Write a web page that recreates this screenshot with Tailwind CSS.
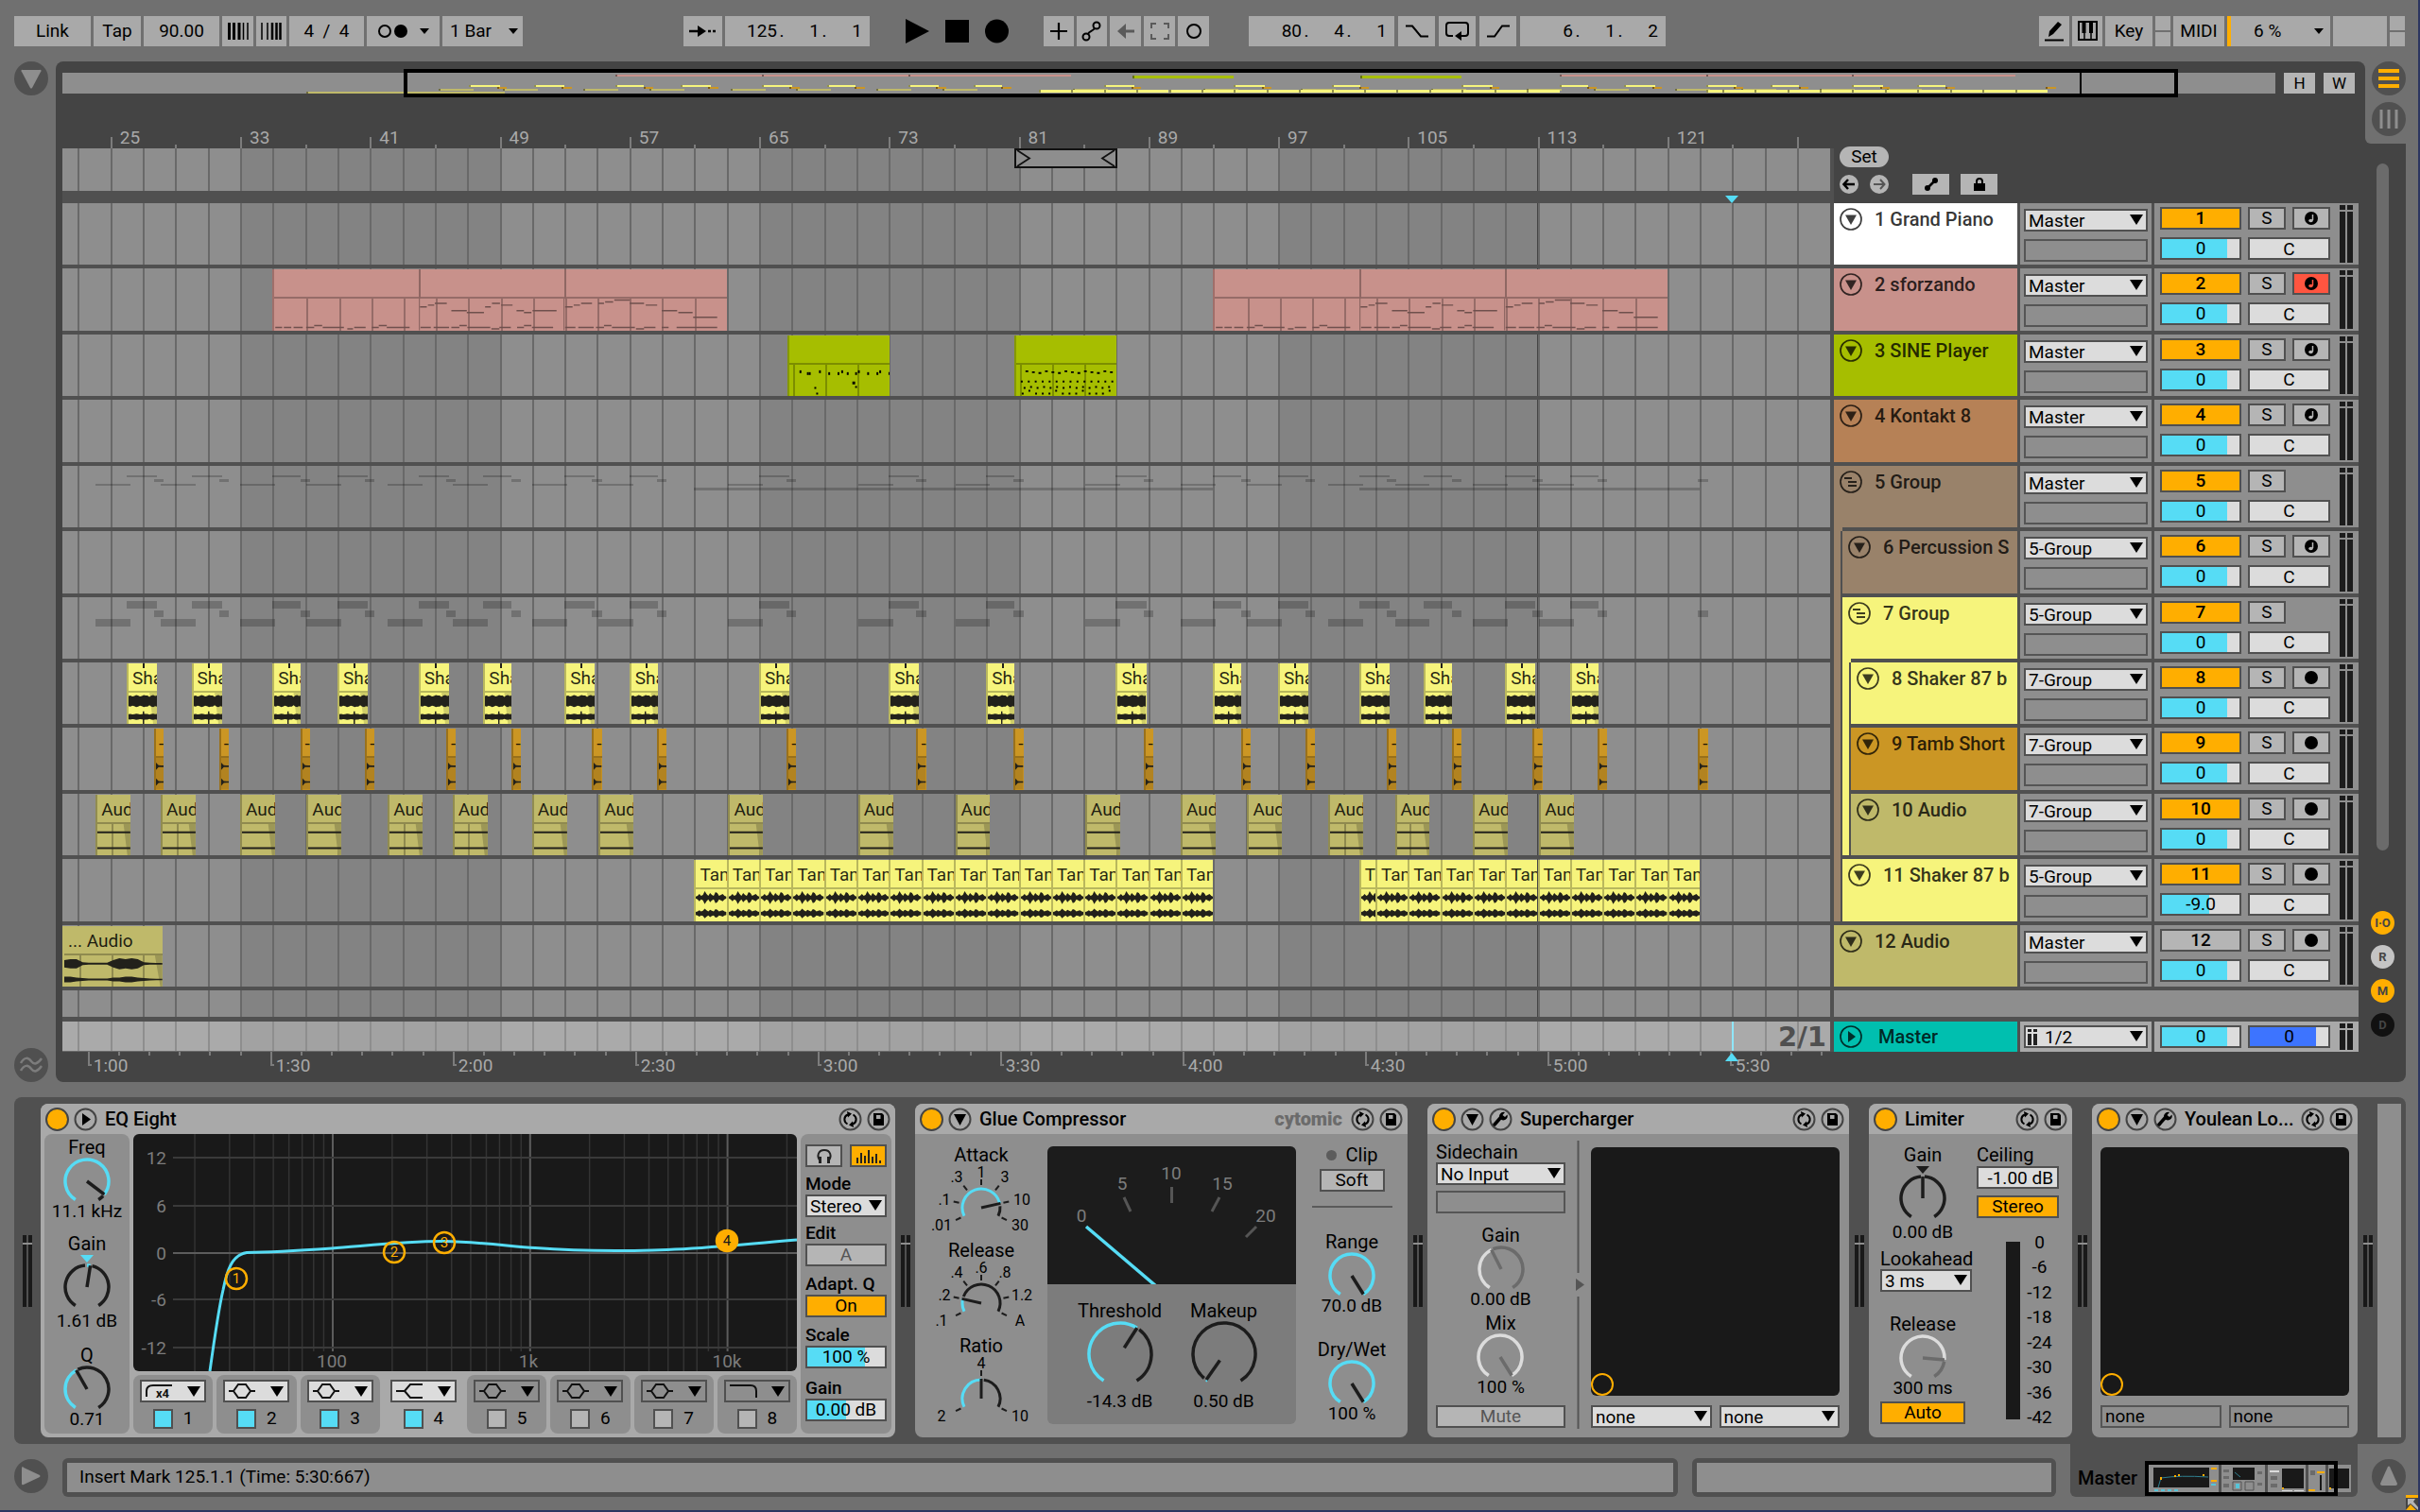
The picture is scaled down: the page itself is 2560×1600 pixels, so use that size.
<!DOCTYPE html>
<html lang="en">
<head>
  <meta charset="UTF-8" />
  <meta name="viewport" content="width=device-width, initial-scale=1" />
  <title>Arrangement</title>
  <script src="https://cdn.jsdelivr.net/npm/@tailwindcss/browser@4"></script>
</head>
<body class="flex h-screen flex-col overflow-hidden border-r-2 border-b-2 border-[#2c3560] bg-[#707070] font-[Roboto,sans-serif] text-[19px] leading-[22px] text-black">

  <!-- Control bar -->
  <header class="flex h-[65px] shrink-0 items-center pr-[14px] pl-[15px]">
    <div class="flex h-8 gap-[3px]">
      <button class="w-[81px] bg-[#a9a9a9]">Link</button>
      <button class="w-[50px] bg-[#a9a9a9]">Tap</button>
      <input aria-label="Tempo" value="90.00" class="w-20 bg-[#a9a9a9] text-center" />
      <button aria-label="Nudge down" class="flex w-[33px] items-center justify-center bg-[#a9a9a9]">
        <svg width="22" height="18" viewBox="0 0 22 18"><path d="M1.5 0v18M6.500 0v18M12 0v18" stroke="#000" stroke-width="3"/><path d="M16.500 0v18M21 0v18" stroke="#000" stroke-width="1.500"/></svg>
      </button>
      <button aria-label="Nudge up" class="flex w-8 items-center justify-center bg-[#a9a9a9]">
        <svg width="22" height="18" viewBox="0 0 22 18"><path d="M1 0v18M7 0v18" stroke="#000" stroke-width="1.500"/><path d="M12 0v18M16.500 0v18M20.500 0v18" stroke="#000" stroke-width="2.500"/></svg>
      </button>
      <input aria-label="Time signature" value="4  /  4" class="w-[79px] bg-[#a9a9a9] text-center whitespace-pre" />
      <button aria-label="Metronome" class="flex w-[77px] items-center gap-3 bg-[#a9a9a9] pl-[11px]">
        <svg width="33" height="16" viewBox="0 0 33 16"><circle cx="8" cy="8" r="6" fill="none" stroke="#000" stroke-width="2"/><circle cx="25" cy="8" r="7" fill="#000"/></svg>
        <svg width="10" height="6" viewBox="0 0 10 6"><path d="M0 0h10L5 6z"/></svg>
      </button>
      <button class="flex w-[85px] items-center justify-between bg-[#a9a9a9] pr-[5px] pl-2">1 Bar
        <svg width="10" height="6" viewBox="0 0 10 6"><path d="M0 0h10L5 6z"/></svg>
      </button>
    </div>

    <div class="ml-[170px] flex h-8 gap-[3px]">
      <button aria-label="Follow" class="flex w-[41px] items-center justify-center bg-[#a9a9a9]">
        <svg width="30" height="14" viewBox="0 0 30 14"><path d="M0 7h11" stroke="#000" stroke-width="2.500"/><path d="M9 1l9 6-9 6z"/><path d="M20 7h3M25 7h3" stroke="#000" stroke-width="2.500"/></svg>
      </button>
      <div data-position="125,1,1" class="flex w-[153px] items-center justify-end bg-[#a9a9a9] pr-2"></div>
    </div>
    <div class="ml-[38px] flex items-center gap-[17px]">
      <button aria-label="Play"><svg width="25" height="28" viewBox="0 0 25 28"><path d="M0 1l25 13L0 27z"/></svg></button>
      <button aria-label="Stop"><svg width="25" height="24" viewBox="0 0 25 24"><path d="M0 0h25v24H0z"/></svg></button>
      <button aria-label="Record"><svg width="25" height="26" viewBox="0 0 25 26"><circle cx="12.500" cy="13" r="12.500"/></svg></button>
    </div>
    <div class="ml-[37px] flex h-8 gap-[3px]">
      <button aria-label="Overdub" class="flex w-8 items-center justify-center bg-[#a9a9a9]"><svg width="18" height="18" viewBox="0 0 18 18"><path d="M9 0v18M0 9h18" stroke="#000" stroke-width="2.200"/></svg></button>
      <button aria-label="Automation arm" class="flex w-8 items-center justify-center bg-[#a9a9a9]"><svg width="22" height="22" viewBox="0 0 22 22" fill="none" stroke="#000" stroke-width="2"><circle cx="5" cy="17" r="3.500"/><circle cx="16" cy="5" r="3.500"/><path d="M7 14c1-3 5-3 7-6"/></svg></button>
      <button aria-label="Re-enable automation" class="flex w-[33px] items-center justify-center bg-[#a9a9a9]"><svg width="18" height="16" viewBox="0 0 18 16"><path d="M18 8H7" stroke="#5a5a5a" stroke-width="3"/><path d="M9 0v16L0 8z" fill="#5a5a5a"/></svg></button>
      <button aria-label="Capture" class="flex w-[33px] items-center justify-center bg-[#a9a9a9]"><svg width="20" height="18" viewBox="0 0 20 18" fill="none" stroke="#5a5a5a" stroke-width="2"><path d="M1 6V1h5M14 1h5v5M19 12v5h-5M6 17H1v-5"/></svg></button>
      <button aria-label="Session record" class="flex w-[33px] items-center justify-center bg-[#a9a9a9]"><svg width="18" height="18" viewBox="0 0 18 18"><circle cx="9" cy="9" r="7" fill="none" stroke="#000" stroke-width="2"/></svg></button>
    </div>
    <div class="ml-[42px] flex h-8 gap-1">
      <div data-position="80,4,1" class="flex w-[154px] items-center justify-end bg-[#a9a9a9] pr-2"></div>
      <button aria-label="Punch in" class="flex w-[39px] items-center justify-center bg-[#a9a9a9]"><svg width="24" height="14" viewBox="0 0 24 14"><path d="M0 1.500h7l9 11h8" fill="none" stroke="#000" stroke-width="2"/></svg></button>
      <button aria-label="Loop" class="flex w-[39px] items-center justify-center bg-[#a9a9a9]"><svg width="26" height="22" viewBox="0 0 26 22"><path d="M8 16H4a3 3 0 0 1-3-3V5a3 3 0 0 1 3-3h17a3 3 0 0 1 3 3v8a3 3 0 0 1-3 3h-5" fill="none" stroke="#000" stroke-width="2"/><path d="M17 11v10l-7-5z"/></svg></button>
      <button aria-label="Punch out" class="flex w-[39px] items-center justify-center bg-[#a9a9a9]"><svg width="24" height="14" viewBox="0 0 24 14"><path d="M0 12.500h8l8-11h8" fill="none" stroke="#000" stroke-width="2"/></svg></button>
      <div data-position="6,1,2" class="flex w-[154px] items-center justify-end bg-[#a9a9a9] pr-2"></div>
    </div>

    <div class="ml-auto flex h-8 gap-[3px]">
      <button aria-label="Draw mode" class="flex w-8 items-center justify-center bg-[#a9a9a9]"><svg width="20" height="22" viewBox="0 0 20 22"><path d="M4 17l1-6 9-10 4 3-9 10zM0 19.500h20v2H0z"/></svg></button>
      <button aria-label="Computer MIDI keyboard" class="flex w-8 items-center justify-center bg-[#a9a9a9]"><svg width="21" height="21" viewBox="0 0 21 21"><path d="M1 1h19v19H1z" fill="none" stroke="#000" stroke-width="2"/><path d="M4.500 1h4v12h-4zM12 1h4v12h-4z"/><path d="M7 12v8M14 12v8" stroke="#000" stroke-width="1.500"/></svg></button>
      <button class="w-[50px] bg-[#a9a9a9]">Key</button>
      <div class="flex w-4 flex-col gap-0.5"><span class="flex-1 bg-[#a9a9a9]"></span><span class="flex-1 bg-[#a9a9a9]"></span></div>
      <button class="w-[54px] bg-[#a9a9a9]">MIDI</button>
      <button class="flex w-[109px] items-center justify-between border-l-4 border-[#ffae00] bg-[#a9a9a9] pr-[7px] pl-6">6 %
        <svg width="10" height="6" viewBox="0 0 10 6"><path d="M0 0h10L5 6z"/></svg>
      </button>
      <span class="w-[57px] bg-[#a9a9a9]"></span>
      <div class="flex w-4 flex-col gap-0.5"><span class="flex-1 bg-[#a9a9a9]"></span><span class="flex-1 bg-[#a9a9a9]"></span></div>
    </div>
  </header>

  <!-- Arrangement -->
  <main class="flex min-h-0 flex-1 pr-[13px]">
    <aside class="flex w-[59px] flex-col justify-between pl-[15px]">
      <button aria-label="Show browser" class="flex size-9 items-center justify-center rounded-full bg-[#505050]"><svg width="22" height="21" viewBox="0 0 22 21"><path d="M2 1h18a1 1 0 0 1 1 2l-9 17q-1 1-2 0L1 3a1 1 0 0 1 1-2z" fill="#8e8e8e"/></svg></button>
      <button aria-label="Show grooves" class="flex size-9 items-center justify-center rounded-full bg-[#505050]"><svg width="24" height="18" viewBox="0 0 24 18" fill="none" stroke="#7c7c7c" stroke-width="2.500"><path d="M1 7c4-7 8-6 11-2s7 3 11-3M1 15c4-7 8-6 11-2s7 3 11-3"/></svg></button>
    </aside>

    <section class="flex min-w-0 flex-1 flex-col rounded-l-[8px] rounded-tr-[8px] bg-[#444] pt-2 pr-[7px] pl-[7px]">
      <div class="flex h-[30px] shrink-0 items-center">
        <div id="overview" class="relative h-[22px] flex-1 bg-[#8e8e8e]"></div>
        <button class="ml-[9px] h-[22px] w-[33px] bg-[#b5b5b5] text-[17px]">H</button>
        <button class="mr-1 ml-[9px] h-[22px] w-[33px] bg-[#b5b5b5] text-[17px]">W</button>
      </div>

      <div class="flex min-h-0 flex-1">
        <div class="flex min-w-0 flex-1 flex-col border-r-4 border-[#505050]">
          <div class="-mr-1 shrink-0 bg-[#444] pr-1"><div id="barRuler" class="relative h-[54px] text-[#a9a9a9]"></div></div>
          <div id="beatLane" class="relative h-[45px] shrink-0"></div>
          <div id="scrub" class="relative h-[13px] shrink-0 bg-[#505050]"></div>
          <div class="relative flex min-h-0 flex-1 flex-col">
            <div id="grid" class="absolute inset-0"></div>
            <div id="lanes" class="relative flex min-h-0 flex-1 flex-col"></div>
            <div class="relative h-[33px] shrink-0 border-b-5 border-[#505050]"></div>
            <div class="relative h-8 shrink-0 border-b border-[#696969] bg-white/25">
              <div class="flex h-full items-center justify-end pr-1 font-['DejaVu_Sans',sans-serif] text-[29px] font-bold text-[#505050]">2/1</div>
              <div id="playhead" class="absolute top-0 h-full w-0.5 bg-[#8fe6f8]"></div>
            </div>
          </div>
          <div class="-mr-1 shrink-0 bg-[#444] pr-1"><div id="timeRuler" class="relative h-8 text-[#a9a9a9]"></div></div>
        </div>

        <div class="flex w-[555px] shrink-0 flex-col">
          <div class="h-[112px] shrink-0 pt-[52px] pl-1.5">
            <button class="h-[22px] w-[52px] rounded-full bg-[#b5b5b5]">Set</button>
            <div class="mt-2 flex h-5 items-center">
              <button aria-label="Previous locator" class="flex size-5 items-center justify-center rounded-full bg-[#b5b5b5]"><svg width="14" height="12" viewBox="0 0 14 12" fill="none" stroke="#000" stroke-width="2.500"><path d="M13 6H2M6 1L1.500 6 6 11"/></svg></button>
              <button aria-label="Next locator" class="ml-3 flex size-5 items-center justify-center rounded-full bg-[#b5b5b5]"><svg width="14" height="12" viewBox="0 0 14 12" fill="none" stroke="#555" stroke-width="2"><path d="M1 6h11M8 1l4.500 5L8 11"/></svg></button>
              <button aria-label="Automation mode" class="ml-[25px] flex h-[22px] w-[39px] items-center justify-center bg-[#b5b5b5]"><svg width="14" height="14" viewBox="0 0 14 14"><circle cx="3" cy="11" r="3"/><circle cx="11" cy="3" r="3"/><path d="M3 11L11 3" stroke="#000" stroke-width="2.500"/></svg></button>
              <button aria-label="Lock envelopes" class="ml-3 flex h-[22px] w-[39px] items-center justify-center bg-[#b5b5b5]"><svg width="14" height="14" viewBox="0 0 14 14"><path d="M1 6h12v8H1z"/><path d="M4 7V4a3 3 0 0 1 6 0v3" fill="none" stroke="#000" stroke-width="2"/></svg></button>
            </div>
          </div>
          <div id="headers" class="flex min-h-0 flex-1 flex-col bg-[#505050]"></div>
          <div class="h-[33px] shrink-0 border-b-5 border-[#505050] bg-[#8e8e8e]"></div>
          <div id="masterHeader" class="flex h-8 shrink-0 gap-[3px] bg-[#505050]"></div>
          <div class="h-8 shrink-0"></div>
        </div>
      </div>
    </section>

    <aside class="flex w-[43px] shrink-0 flex-col rounded-r-[8px] bg-[#444]">
      <div class="flex h-[87px] shrink-0 flex-col items-end gap-[7px] rounded-bl-[6px] bg-[#707070]">
        <button aria-label="Arrangement view" class="flex size-9 items-center justify-center rounded-full bg-[#505050]"><svg width="22" height="20" viewBox="0 0 22 20"><path d="M0 2h22M0 10h22M0 18h22" stroke="#ffae00" stroke-width="4"/></svg></button>
        <button aria-label="Session view" class="flex size-9 items-center justify-center rounded-full bg-[#505050]"><svg width="20" height="20" viewBox="0 0 20 20"><path d="M2 0v20M10 0v20M18 0v20" stroke="#8e8e8e" stroke-width="3"/></svg></button>
      </div>
      <div class="mt-[21px] ml-3 w-[13px] flex-1 rounded-full bg-[#6b6b6b]"></div>
      <div class="mt-16 mb-12 ml-1.5 flex flex-col gap-[11px] text-[13px] leading-[13px] font-bold text-[#444]">
        <button class="size-[25px] rounded-full bg-[#ffae00]">I·O</button>
        <button class="size-[25px] rounded-full bg-[#c4c4c4]">R</button>
        <button class="size-[25px] rounded-full bg-[#ffae00]">M</button>
        <button class="size-[25px] rounded-full bg-[#111]">D</button>
      </div>
    </aside>
  </main>

  <!-- Device chain -->
  <section class="mt-4 mr-[13px] ml-[15px] flex h-[367px] shrink-0 rounded-[8px] bg-[#505050] py-[7px] pr-[5px]">
    <div data-meter class="flex w-7 shrink-0 items-center justify-center"></div>

    <article class="w-[904px] shrink-0 rounded-[8px] bg-[#a9a9a9]">
      <div data-title="EQ Eight" data-icons="play"></div>
      <div class="flex gap-1 px-1">
        <div class="flex h-[317px] w-[90px] flex-col items-center rounded-[8px] bg-[#8e8e8e] pt-[3px]">
          <div data-knob="Freq" data-value="11.1 kHz" data-pos="0.93"></div>
          <div class="mt-3" data-knob="Gain" data-value="1.61 dB" data-pos="0.53" data-bipolar="#56dcf5"></div>
          <div class="mt-3.5" data-knob="Q" data-value="0.71" data-pos="0.40"></div>
        </div>
        <div class="w-[702px]">
          <svg id="eq" class="block h-[251px] w-full rounded-[6px] bg-[#191919]" viewBox="0 0 702 251"></svg>
          <div id="bands" class="mt-1 flex h-[62px] gap-1"></div>
        </div>
        <div class="flex h-[317px] w-[96px] flex-col rounded-[8px] bg-[#8e8e8e] px-[5px] pt-[11px] font-medium">
          <div class="flex justify-between">
            <button aria-label="Audition" class="flex h-6 w-[39px] items-center justify-center border-2 border-[#505050] bg-[#b5b5b5]"><svg width="18" height="17" viewBox="0 0 18 17" fill="none" stroke="#222"><path d="M5 14C0 8 3 2 9 2s9 6 4 12" stroke-width="2"/><path d="M4.500 9v7M13.500 9v7" stroke-width="3"/></svg></button>
            <button aria-label="Analyzer" class="flex h-6 w-[39px] items-center justify-center border-2 border-[#505050] bg-[#ffae00]"><svg width="26" height="15" viewBox="0 0 26 15"><path d="M1 15V9M5 15V4M9 15V7M13 15V1M17 15V8M21 15V5M25 15v-3" stroke="#222" stroke-width="2"/></svg></button>
          </div>
          <span class="mt-[7px]">Mode</span>
          <div data-select="Stereo" data-label="Mode" class="font-normal"></div>
          <span class="mt-1.5">Edit</span>
          <button class="h-6 border-2 border-[#505050] bg-[#b5b5b5] leading-5 font-normal text-[#555]">A</button>
          <span class="mt-2">Adapt. Q</span>
          <button class="h-6 border-2 border-[#505050] bg-[#ffae00] leading-5 font-normal">On</button>
          <span class="mt-2">Scale</span>
          <div data-slider="100 %" data-fill="74" data-label="Scale"></div>
          <span class="mt-2.5">Gain</span>
          <div data-slider="0.00 dB" data-fill="50" data-label="Output gain"></div>
        </div>
      </div>
    </article>

    <div data-meter class="flex w-[21px] shrink-0 items-center justify-center"></div>

    <article class="w-[521px] shrink-0 rounded-[8px] bg-[#8e8e8e]">
      <div data-title="Glue Compressor" data-icons="down" data-brand="cytomic"></div>
      <div class="flex">
        <div class="flex w-[140px] flex-col items-center pt-[11px] text-[20px]">
          <span>Attack</span>
          <div data-dial=".01,.1,.3,1,3,10,30" data-index="5" data-label="Attack"></div>
          <span>Release</span>
          <div data-dial=".1,.2,.4,.6,.8,1.2,A" data-index="1" data-label="Release"></div>
          <span>Ratio</span>
          <div data-dial="2,,,4,,,10" data-index="3" data-label="Ratio"></div>
        </div>
        <div class="mt-[13px] h-[294px] w-[263px] overflow-hidden rounded-[6px] bg-[#7c7c7c]">
          <svg class="block h-[146px] w-full bg-[#1c1c1c]" viewBox="0 0 263 146">
            <g stroke="#555" stroke-width="3"><path d="M81 54l7 15M131.500 43v17M182 54l-8 15M221 85l-11 11"/></g>
            <g fill="#7c7c7c" font-size="19" text-anchor="middle"><text x="36" y="80">0</text><text x="79" y="46">5</text><text x="131" y="35">10</text><text x="185" y="46">15</text><text x="231" y="80">20</text></g>
            <path d="M41 85l74 63" stroke="#56dcf5" stroke-width="3.500"/>
          </svg>
          <div class="flex justify-center gap-[22px] pt-[17px]">
            <div class="w-[88px]" data-knob="Threshold" data-value="-14.3 dB" data-pos="0.61" data-r="33"></div>
            <div class="w-[88px]" data-knob="Makeup" data-value="0.50 dB" data-pos="0.01" data-r="33"></div>
          </div>
        </div>
        <div class="flex flex-1 flex-col items-center pt-[11px]">
          <div class="flex items-center gap-2.5 text-[20px]"><span class="size-[11px] rounded-full bg-[#5c5c5c]"></span>Clip</div>
          <button class="mt-1 h-6 w-[69px] border-2 border-[#505050] bg-[#b5b5b5] leading-5">Soft</button>
          <div class="mt-[15px] h-0.5 w-[85px] bg-[#5a5a5a]"></div>
          <div class="mt-[25px]" data-knob="Range" data-value="70.0 dB" data-pos="1"></div>
          <div class="mt-6" data-knob="Dry/Wet" data-value="100 %" data-pos="1"></div>
        </div>
      </div>
    </article>

    <div data-meter class="flex w-[21px] shrink-0 items-center justify-center"></div>

    <article class="w-[446px] shrink-0 rounded-[8px] bg-[#8e8e8e]">
      <div data-title="Supercharger" data-icons="down,wrench"></div>
      <div class="flex">
        <div class="flex w-[146px] flex-col pt-2 pl-[9px]">
          <span class="text-[20px]">Sidechain</span>
          <div data-select="No Input" data-label="Sidechain"></div>
          <div class="mt-1.5 h-6 border-2 border-[#555]"></div>
          <div class="mt-3 self-center" data-knob="Gain" data-value="0.00 dB" data-pos="0.41" data-off></div>
          <div class="mt-[3px] self-center" data-knob="Mix" data-value="100 %" data-pos="1" data-off></div>
          <button class="mt-2 h-6 border-2 border-[#505050] bg-[#b5b5b5] leading-5 text-[#555]">Mute</button>
        </div>
        <svg class="mt-[7px] ml-[7px]" width="14" height="305" viewBox="0 0 14 305"><path d="M6.500 0v140M6.500 165v140" stroke="#555" stroke-width="2"/><path d="M4 146l9 6.500-9 6.500z" fill="#555"/></svg>
        <div class="mt-3.5 ml-1.5 w-[263px]">
          <div class="flex h-[263px] items-end rounded-[6px] bg-[#191919]"><span class="size-6 rounded-full border-2 border-[#ffae00]"></span></div>
          <div class="mt-2.5 flex gap-2">
            <div data-select="none" data-label="X parameter" class="flex-1"></div>
            <div data-select="none" data-label="Y parameter" class="flex-1"></div>
          </div>
        </div>
      </div>
    </article>

    <div data-meter class="flex w-[21px] shrink-0 items-center justify-center"></div>

    <article class="w-[215px] shrink-0 rounded-[8px] bg-[#8e8e8e]">
      <div data-title="Limiter" data-icons=""></div>
      <div class="flex pl-3">
        <div class="flex w-[97px] flex-col pt-[11px]">
          <div class="w-[90px]" data-knob="Gain" data-value="0.00 dB" data-pos="0.5" data-bipolar="#1c1c1c"></div>
          <span class="mt-1.5 text-[20px]">Lookahead</span>
          <div data-select="3 ms" data-label="Lookahead"></div>
          <div class="mt-[23px] w-[90px]" data-knob="Release" data-value="300 ms" data-pos="0.82" data-off></div>
          <button class="mt-[3px] h-6 w-[90px] border-2 border-[#505050] bg-[#ffae00] leading-5">Auto</button>
        </div>
        <div class="ml-[5px] flex w-[87px] flex-col pt-[11px]">
          <label for="ceiling" class="text-[20px]">Ceiling</label>
          <input id="ceiling" value="-1.00 dB" class="mt-px h-6 border-2 border-[#505050] bg-[#dcdcdc] pr-1 text-right" />
          <button class="mt-[7px] h-6 border-2 border-[#505050] bg-[#ffae00] leading-5">Stereo</button>
          <div class="mt-[15px] flex justify-end">
            <span class="mt-2.5 h-[188px] w-[15px] bg-[#191919]"></span>
            <div class="flex h-[207px] w-[41px] flex-col justify-between text-center"><span>0</span><span>-6</span><span>-12</span><span>-18</span><span>-24</span><span>-30</span><span>-36</span><span>-42</span></div>
          </div>
        </div>
      </div>
    </article>

    <div data-meter class="flex w-[21px] shrink-0 items-center justify-center"></div>

    <article class="w-[281px] shrink-0 rounded-[8px] bg-[#8e8e8e]">
      <div data-title="Youlean Lo..." data-icons="down,wrench"></div>
      <div class="mx-[9px] mt-3.5 flex h-[263px] items-end rounded-[6px] bg-[#191919]"><span class="size-6 rounded-full border-2 border-[#ffae00]"></span></div>
      <div class="mx-[9px] mt-2.5 flex gap-2">
        <div class="h-6 flex-1 border-2 border-[#555] pl-[3px] leading-5">none</div>
        <div class="h-6 flex-1 border-2 border-[#555] pl-[3px] leading-5">none</div>
      </div>
    </article>

    <div data-meter class="flex w-[21px] shrink-0 items-center justify-center"></div>
    <div class="flex-1 bg-[#8e8e8e]"></div>
  </section>

  <!-- Status bar -->
  <footer class="flex h-[70px] shrink-0 pr-[13px] pl-[15px]">
    <button aria-label="Info view" class="mt-4 flex size-9 items-center justify-center rounded-full bg-[#505050]"><svg width="22" height="22" viewBox="0 0 22 22"><path d="M2 1q-1 0-1 2v16q0 2 2 1l17-8q1-1 0-2L3 2z" fill="#8e8e8e"/></svg></button>
    <div class="mt-[15px] ml-[15px] h-[41px] flex-1 rounded-[6px] bg-[#505050] p-[5px]"><div class="h-full bg-[#8e8e8e] pl-[13px] leading-[30px]">Insert Mark 125.1.1 (Time: 5:30:667)</div></div>
    <div class="mt-[15px] ml-[15px] h-[41px] w-[385px] rounded-[6px] bg-[#505050] p-[5px]"><div class="h-full bg-[#8e8e8e]"></div></div>
    <div class="ml-[15px] flex h-14 w-[304px] items-center rounded-b-[6px] bg-[#505050] pt-4 pl-2 text-[20px] font-medium">
      <span class="w-[71px]">Master</span>
      <div class="relative h-[37px] flex-1 py-[3px]">
        <svg id="thumb" class="h-[31px] w-[218px]" viewBox="0 0 218 31"></svg>
        <div class="absolute top-0 left-0 h-full w-[204px] border-4 border-black"></div>
      </div>
    </div>
    <div class="relative flex w-[51px] justify-end">
      <button aria-label="Show devices" class="mt-4 flex size-9 items-center justify-center rounded-full bg-[#505050]"><svg width="22" height="22" viewBox="0 0 22 22"><path d="M10 1q1-1 2 0l8 18q0 2-2 2H4q-2 0-2-2z" fill="#8e8e8e"/></svg></button>
      <svg class="absolute -right-[13px] bottom-0" width="13" height="16" viewBox="0 0 13 16"><path d="M0 0h13v16H0z" fill="#444"/><path d="M0 0h13v3H0zM0 16l5-6 3 3 3 3z" fill="#ffae00"/><path d="M2 4h8L8 7l5 6v3L5 9l-3 2z" fill="#b5b5b5"/></svg>
    </div>
  </footer>

  <script>
    const FIRST = 22.04, LAST = 131.04;
    const pct = bar => (bar - FIRST) / (LAST - FIRST) * 100;
    const $ = id => document.getElementById(id);
    const arrow = '<svg width="14" height="11" viewBox="0 0 14 11"><path d="M0 0h14L7 11z"/></svg>';

    // ---- shared controls ----
    function select(value, label, prefix) {
      return `<div class="relative h-6 border-2 border-[#505050] bg-[#dcdcdc]">
        ${prefix || ''}<select aria-label="${label}" class="h-full w-full appearance-none leading-5 ${prefix ? 'pl-5' : 'pl-[3px]'}"><option>${value}</option></select>
        <span class="pointer-events-none absolute top-1 right-[3px]">${arrow}</span></div>`;
    }

    function slider(value, fill, label, blue) {
      return `<div class="relative h-6 border-2 border-[#505050] bg-[#dcdcdc] font-normal">
        <div class="absolute inset-y-0 left-0 ${blue ? 'bg-[#3d74ff]' : 'bg-[#56dcf5]'}" style="width:${fill}%"></div>
        <input aria-label="${label}" value="${value}" class="relative block h-5 w-full text-center" /></div>`;
    }

    function polar(cx, cy, r, deg) {
      const a = (deg - 90) * Math.PI / 180;
      return [cx + r * Math.cos(a), cy + r * Math.sin(a)];
    }

    function arc(cx, cy, r, from, to) {
      const [x1, y1] = polar(cx, cy, r, from), [x2, y2] = polar(cx, cy, r, to);
      return `M${x1} ${y1}A${r} ${r} 0 ${to - from > 180 ? 1 : 0} 1 ${x2} ${y2}`;
    }

    function knob(d) {
      const r = d.r ? +d.r : 23, off = 'off' in d, bi = d.bipolar;
      const cx = r + 2, cy = bi ? 35 : r + 2;
      const h = bi ? 60 : (r > 30 ? 74 : 46);
      const deg = -148 + 296 * d.pos;
      const on = off ? '#dcdcdc' : '#56dcf5', dark = off ? '#6b6b6b' : '#1c1c1c';
      const gap = 5;
      let s = '';
      if (bi) {
        s += `<path d="M${cx - 7} 1h14l-7 8z" fill="${bi}"/>`;
        s += `<path d="${arc(cx, cy, r, -148, -gap)}" stroke="${dark}"/><path d="${arc(cx, cy, r, Math.max(deg, 0) + gap, 148)}" stroke="${dark}"/>`;
        if (deg > 1) s += `<path d="${arc(cx, cy, r, 0, deg)}" stroke="${on}"/>`;
      } else {
        s += `<path d="${arc(cx, cy, r, -148, deg)}" stroke="${on}"/>`;
        if (deg + gap < 146) s += `<path d="${arc(cx, cy, r, deg + gap, 148)}" stroke="${dark}"/>`;
      }
      const [x0, y0] = polar(cx, cy, r > 30 ? 8 : 0, deg), [x1, y1] = polar(cx, cy, r, deg);
      s += `<path d="M${x0} ${y0}L${x1} ${y1}" stroke="${dark}"/>`;
      return `<label class="relative flex flex-col items-center"><span class="text-[20px]">${d.knob}</span>
        <svg width="${cx * 2}" height="${h}" viewBox="0 0 ${cx * 2} ${h}" fill="none" stroke-width="3.5">${s}</svg>
        <span class="whitespace-nowrap">${d.value}</span><input type="range" value="${d.pos * 100}" class="absolute inset-0 opacity-0" /></label>`;
    }

    function dial(d) {
      const cx = 70, cy = 45, deg = i => -116 + i * 116 / 3, at = deg(+d.index);
      const spots = [[-42, 24], [-39, -3], [-26, -27], [0, -32], [25, -27], [43, -3], [41, 24]];
      let s = `<path d="${arc(cx, cy, 20, -116, at)}" stroke="#56dcf5"/><path d="${arc(cx, cy, 20, at + 8, 116)}" stroke="#1c1c1c"/>`;
      d.dial.split(',').forEach((t, i) => {
        if (!t) return;
        const [x1, y1] = polar(cx, cy, 24, deg(i)), [x2, y2] = polar(cx, cy, 30, deg(i));
        s += `<path d="M${x1} ${y1}L${x2} ${y2}" stroke="#1c1c1c" stroke-width="2"/>`;
        s += `<text x="${cx + spots[i][0]}" y="${cy + spots[i][1]}" font-size="16" fill="#000" stroke="none" text-anchor="middle">${t}</text>`;
      });
      const [px, py] = polar(cx, cy, 21, at);
      s += `<path d="M${cx} ${cy}L${px} ${py}" stroke="#1c1c1c"/>`;
      return `<label class="relative block"><svg width="140" height="79" viewBox="0 0 140 79" fill="none" stroke-width="3">${s}</svg>
        <input type="range" aria-label="${d.label}" class="absolute inset-0 opacity-0" /></label>`;
    }

    // ---- device title bars ----
    const icons = {
      play: '<path d="M9 6v13l9-6.500z"/>',
      down: '<path d="M6 7h13l-6.500 12z"/>',
      wrench: '<path d="M6 18l7-8" stroke="#000" stroke-width="3.500" stroke-linecap="round"/><path d="M12 12a4.500 4.500 0 0 1 5-7l-2.500 3 2.500 2 2.500-2.500a4.500 4.500 0 0 1-7.500 4.500z"/>',
      swap: '<path d="M9.500 17.500C5 15 5.500 9 10 7.500M15.500 7.500C20 10 19.500 16 15 17.500" fill="none" stroke="#000" stroke-width="2"/><path d="M9 4l5 2.500-4 4zM16 21l-5-2.500 4-4z"/>',
      save: '<path d="M7 6h9l2 2v11H7z"/><path d="M10 8h4.500v4H10z" fill="#a9a9a9"/>'
    };
    const names = { play: 'Fold display', down: 'Unfold', wrench: 'Open plug-in window', swap: 'Hot-swap', save: 'Save preset' };
    const ring = k => `<button aria-label="${names[k]}"><svg width="25" height="25" viewBox="0 0 25 25"><circle cx="12.5" cy="12.5" r="11" fill="none" stroke="#444" stroke-width="2"/>${icons[k]}</svg></button>`;

    document.querySelectorAll('[data-title]').forEach(el => {
      const d = el.dataset;
      el.className = 'flex h-8 items-center gap-[5px] rounded-t-[8px] bg-[#a9a9a9] pr-[5px] pl-[5px] text-[20px] font-medium';
      el.innerHTML = `<button aria-label="${d.title} on" class="size-[25px] rounded-full border-2 border-[#444] bg-[#ffae00]"></button>
        ${d.icons ? d.icons.split(',').map(ring).join('') : ''}<h2 class="ml-[3px] flex-1 whitespace-nowrap">${d.title}</h2>
        ${d.brand ? `<span class="mr-1 text-[20px] font-black text-[#6b6b6b]">${d.brand}</span>` : ''}${ring('swap')}${ring('save')}`;
    });

    document.querySelectorAll('[data-meter]').forEach(el => {
      el.innerHTML = '<svg width="10" height="76" viewBox="0 0 10 76"><path d="M2 0v76M8 0v76" stroke="#191919" stroke-width="4"/><path d="M0 9h10" stroke="#8e8e8e" stroke-width="2"/></svg>';
    });
    document.querySelectorAll('[data-knob]').forEach(el => el.innerHTML = knob(el.dataset));
    document.querySelectorAll('[data-dial]').forEach(el => el.innerHTML = dial(el.dataset));
    document.querySelectorAll('[data-select]').forEach(el => el.innerHTML = select(el.dataset.select, el.dataset.label));
    document.querySelectorAll('[data-slider]').forEach(el => el.innerHTML = slider(el.dataset.slider, el.dataset.fill, el.dataset.label));
    document.querySelectorAll('[data-position]').forEach(el => {
      const unit = ['Bars', 'Beats', 'Sixteenths'];
      el.innerHTML = el.dataset.position.split(',').map((v, i) =>
        `<input aria-label="${unit[i]}" value="${v}" class="w-[35px] text-right" />`).join('<span class="w-2.5 text-center">.</span>');
    });

    // ---- EQ display ----
    (function () {
      const X = f => 211 + Math.log10(f / 100) * 208.8;
      let s = '';
      for (const dec of [10, 100, 1000, 10000])
        for (let m = 1; m < 10; m++) {
          const f = dec * m;
          if (f < 20 || f > 20000) continue;
          const major = m === 1;
          s += `<path d="M${X(f)} 0V${major || m === 9 || m === 8 ? 230 : 251}" stroke="${major ? '#5c5c5c' : '#333'}" stroke-width="${major ? 2 : 1.5}"/>`;
        }
      [[12, 25], [6, 76], [0, 126], [-6, 175], [-12, 226]].forEach(([v, y]) => {
        s += `<path d="M42 ${y}H702" stroke="${v ? '#3a3a3a' : '#5c5c5c'}" stroke-width="2"/><text x="35" y="${y + 7}" text-anchor="end">${v}</text>`;
      });
      [['100', 210], ['1k', 418], ['10k', 628]].forEach(([t, x]) => s += `<text x="${x}" y="247" text-anchor="middle">${t}</text>`);
      s += '<path d="M81 251C86 215 91 182 95 165C99 145 104 128 120 125.500C150 125 180 123 210 121C240 119 290 113 329 113.500C365 114 400 119 425 120.500C470 124 510 124 550 123C600 122 640 117 702 112" fill="none" stroke="#56dcf5" stroke-width="3"/>';
      [[1, 109, 153], [2, 276, 125], [3, 329, 115], [4, 628, 113]].forEach(([n, x, y]) => {
        s += `<circle cx="${x}" cy="${y}" r="11" fill="${n === 4 ? '#ffae00' : 'none'}" stroke="#ffae00" stroke-width="2.5"/><text x="${x}" y="${y + 5}" font-size="15" text-anchor="middle" fill="${n === 4 ? '#191919' : '#ffae00'}">${n}</text>`;
      });
      $('eq').innerHTML = `<g fill="#7c7c7c" font-size="19">${s}</g>`;

      const shapes = {
        cut: '<path d="M1 15V9q0-6 7-6h20"/>', bell: '<path d="M0 9h5M23 9h5M5 9l5-7h8l5 7-5 7h-8z"/>',
        shelf: '<path d="M0 9h9l6-7h13M9 9l6 7h13"/>', high: '<path d="M0 3h22q6 0 6 6v7"/>'
      };
      const bands = ['cut', 'bell', 'bell', 'shelf', 'bell', 'bell', 'bell', 'high'];
      $('bands').innerHTML = bands.map((b, i) => `
        <div class="flex flex-1 flex-col items-center rounded-[8px] pt-[5px] ${i === 3 ? '' : 'bg-[#8e8e8e]'}">
          <button aria-label="Filter ${i + 1} type" class="flex h-6 w-[70px] items-center justify-between border-2 border-[#505050] px-1 ${i < 4 ? 'bg-[#dcdcdc]' : ''}">
            <svg width="29" height="18" viewBox="0 0 29 18" fill="none" stroke="#111" stroke-width="2">${shapes[b]}${b === 'cut' ? '<text x="11" y="16" font-size="13" font-weight="bold" fill="#111" stroke="none">x4</text>' : ''}</svg>${arrow}
          </button>
          <label class="mt-1.5 flex items-center gap-[11px]"><input type="checkbox" ${i < 4 ? 'checked' : ''} class="size-[21px] appearance-none border-2 border-[#505050] bg-[#b5b5b5] checked:bg-[#56dcf5]" />${i + 1}</label>
        </div>`).join('');
    })();

    // ---- tracks ----
    const shaker = [26, 30, 35, 39, 44, 48, 53, 57, 65, 73, 79, 87, 93, 97, 102, 106, 111, 115];
    const audio = [24.1, 28.1, 33, 37.1, 42.1, 46.1, 51, 55.1, 63.1, 71.1, 77.1, 85.1, 91, 95.1, 100.1, 104.2, 109, 113.1];
    const len = [0, 0, 1, 0, 0, 1, 0, 1, 0, 0, 1, 0, 1, 0, 0, 1, 0, 1].map(v => v ? 1.75 : 1.87);
    const tamb = shaker.map(b => b + 1.7).concat(122.9);
    const loops = [];
    for (let b = 61; b < 93; b += 2) loops.push([b, b + 2]);
    loops.push([102, 103]);
    for (let b = 103; b < 123; b += 2) loops.push([b, b + 2]);
    const ranges = {
      shaker: shaker.map((b, i) => [b, b + len[i]]), tamb: tamb.map(b => [b, b + .6]), audio: audio.map(b => [b, b + 2.15])
    };

    const brown = '#99826a', yellow = '#f6f47c';
    // name, colour, output, arm, volume, nesting strips [colour, side line, last row]
    const tracks = [
      ['1 Grand Piano', '#ffffff', 'Master', 'note', '0'], ['2 sforzando', '#c8918b', 'Master', 'armed', '0'],
      ['3 SINE Player', '#a6be00', 'Master', 'note', '0'], ['4 Kontakt 8', '#b68156', 'Master', 'note', '0'],
      ['5 Group', brown, 'Master', '', '0', [[brown]]], ['6 Percussion S', brown, '5-Group', 'note', '0', [[brown, 1]]],
      ['7 Group', yellow, '5-Group', '', '0', [[brown, 1], [yellow]]], ['8 Shaker 87 b', yellow, '7-Group', 'dot', '0', [[brown, 1], [yellow, 1]]],
      ['9 Tamb Short', '#cb9624', '7-Group', 'dot', '0', [[brown, 1], [yellow, 1]]], ['10 Audio', '#bfb96a', '7-Group', 'dot', '0', [[brown, 1], [yellow, 1, 1]]],
      ['11 Shaker 87 b', yellow, '5-Group', 'dot', '-9.0', [[brown, 1, 1]]], ['12 Audio', '#bfb96a', 'Master', 'dot', '0']
    ];

    const bars = `<div class="ml-[10px] flex gap-0.5 py-0.5">${'<span class="flex w-1.5 flex-col gap-0.5"><i class="h-[5px] bg-[#1c1c1c]"></i><i class="flex-1 bg-[#1c1c1c]"></i></span>'.repeat(2)}</div>`;
    const fold = '<path d="M7 8.500h12l-6 10.500z"/>', group = '<path d="M6 9h8M10 13h9M10 17h9" stroke="#000" stroke-width="2"/>';

    $('headers').innerHTML = tracks.map(([name, color, out, arm, vol, strips = []], i) => {
      const isGroup = !arm, num = name.split(' ')[0];
      const armIcon = arm === 'dot' ? '<svg width="14" height="14" viewBox="0 0 14 14"><circle cx="7" cy="7" r="7"/></svg>'
        : `<svg width="14" height="14" viewBox="0 0 14 14"><circle cx="7" cy="7" r="7"/><path d="M8.500 3v6" fill="none" stroke="${arm === 'armed' ? '#ff5540' : '#b5b5b5'}" stroke-width="1.500"/><ellipse cx="6.500" cy="9.500" rx="2.300" ry="1.700" fill="${arm === 'armed' ? '#ff5540' : '#b5b5b5'}"/></svg>`;
      return `<div class="flex min-h-0 flex-1 gap-[3px]">
        <div class="flex w-[194px] shrink-0">
          ${strips.map(([c, line, end]) => `<span class="w-[9px] shrink-0 border-[#505050] ${line ? 'border-r-2' : ''} ${end ? 'border-b-4' : ''}" style="background-color:${c}"></span>`).join('')}
          <div class="relative flex min-w-0 flex-1 items-start border-b-4 border-[#505050] pt-1 whitespace-nowrap ${isGroup ? '' : 'pl-[5px]'}" style="background-color:${color}">
            <button aria-label="Fold track ${num}" class="shrink-0 opacity-75 ${isGroup ? '-ml-1' : ''}"><svg width="26" height="26" viewBox="0 0 26 26"><circle cx="13" cy="13" r="11" fill="none" stroke="#000" stroke-width="1.700"/>${isGroup ? group : fold}</svg></button>
            <span class="ml-3 pt-0.5 text-[20px] font-medium text-black/80">${name}</span>
          </div>
        </div>
        <div class="flex w-[139px] shrink-0 flex-col gap-2 border-b-4 border-[#505050] bg-[#8e8e8e] px-1 pt-1.5">
          ${select(out, 'Output of track ' + num)}
          <div class="h-6 border-2 border-[#555]"></div>
        </div>
        <div class="flex flex-1 border-b-4 border-[#505050] bg-[#8e8e8e] pl-1.5">
          <div class="grid w-[180px] grid-cols-[86px_40px_40px] content-start gap-x-[7px] gap-y-2 pt-1">
            <button class="h-6 border-2 border-[#505050] leading-5 font-medium ${i === 11 ? 'bg-[#b5b5b5]' : 'bg-[#ffae00]'}">${num}</button>
            <button class="h-6 border-2 border-[#505050] bg-[#b5b5b5] leading-5">S</button>
            ${arm ? `<button aria-label="Arm track ${num}" class="flex h-6 items-center justify-center border-2 border-[#505050] ${arm === 'armed' ? 'bg-[#ff5540]' : 'bg-[#b5b5b5]'}">${armIcon}</button>` : '<span></span>'}
            ${slider(vol, vol === '0' ? 84 : 61, 'Volume of track ' + num)}
            <div class="col-span-2"><input aria-label="Pan of track ${num}" value="C" class="h-6 w-full border-2 border-[#505050] bg-[#dcdcdc] text-center" /></div>
          </div>
          ${bars}
        </div>
      </div>`;
    }).join('');

    $('masterHeader').innerHTML = `
      <div class="flex w-[194px] items-center bg-[#00bfaf] pl-[5px]">
        <button aria-label="Unfold master" class="opacity-75"><svg width="26" height="26" viewBox="0 0 26 26"><circle cx="13" cy="13" r="11" fill="none" stroke="#000" stroke-width="1.700"/><path d="M10 7v12l8-6z"/></svg></button>
        <span class="ml-4 text-[20px] font-medium text-black/80">Master</span>
      </div>
      <div class="w-[139px] bg-[#a9a9a9] px-1 pt-1">${select('1/2', 'Master output', '<svg class="absolute top-0.5 left-0.5" width="12" height="17" viewBox="0 0 12 17"><path d="M2 0v3M8 0v3M2 5v12M8 5v12" stroke="#222" stroke-width="4"/></svg>')}</div>
      <div class="flex flex-1 bg-[#a9a9a9] pl-1.5">
        <div class="grid w-[180px] grid-cols-[86px_87px] gap-[7px] pt-1">${slider('0', 84, 'Master volume')}${slider('0', 84, 'Cue volume', true)}</div>
        ${bars}
      </div>`;

    // ---- grid, rulers ----
    function gridHtml() {
      let s = '';
      [[FIRST, 33, 0], [33, 49, 1], [49, 65, 0], [65, 81, 1], [81, 97, 0], [97, 113, 1], [113, LAST, 0]].forEach(([a, b, dark]) => {
        s += `<div class="absolute inset-y-0 ${dark ? 'bg-[#838383]' : 'bg-[#8e8e8e]'}" style="left:${pct(a)}%;width:${pct(b) - pct(a)}%"></div>`;
      });
      for (let b = 23; b < 131; b += 2) s += `<div class="absolute inset-y-0 w-0.5 bg-[#696969]" style="left:${pct(b)}%"></div>`;
      return s;
    }
    $('grid').innerHTML = gridHtml();
    $('beatLane').innerHTML = gridHtml() +
      `<div class="absolute top-0 h-[21px] border-2 border-[#111] bg-[#8e8e8e]" style="left:${pct(80.75)}%;width:${pct(87.1) - pct(80.75)}%">
        <svg class="absolute top-0 left-0" width="16" height="17" viewBox="0 0 16 17" fill="none" stroke="#111" stroke-width="1.800"><path d="M1 0l13 8.500L1 17"/></svg>
        <svg class="absolute top-0 right-0" width="16" height="17" viewBox="0 0 16 17" fill="none" stroke="#111" stroke-width="1.800"><path d="M15 0L2 8.500 15 17"/></svg></div>`;
    let ruler = '';
    for (let b = 25; b <= 129; b += 4) {
      const major = (b - 25) % 8 === 0;
      ruler += `<div class="absolute bottom-0 border-l-2 border-[#7c7c7c] ${major ? 'h-3' : 'h-1'}" style="left:${pct(b)}%"></div>`;
      if (major && b < 129) ruler += `<span class="absolute bottom-0 pl-2.5" style="left:${pct(b)}%">${b}</span>`;
    }
    $('barRuler').innerHTML = ruler;

    let time = '';
    for (let t = 60; t <= 345; t += 5) {
      const x = pct(1.1 + t * .375), major = t % 30 === 0;
      time += `<div class="absolute top-0 border-l-2 border-[#7c7c7c] ${major ? 'h-[15px] w-1 border-b-2' : 'h-1'}" style="left:${x}%"></div>`;
      if (major) time += `<span class="absolute top-1 pl-1.5" style="left:${x}%">${Math.floor(t / 60)}:${t % 60 ? '30' : '00'}</span>`;
    }
    $('timeRuler').innerHTML = time + `<svg class="absolute top-px -translate-x-1/2" style="left:${pct(125)}%" width="14" height="9" viewBox="0 0 14 9"><path d="M0 9h14L7 0z" fill="#56dcf5"/></svg>`;
    $('scrub').innerHTML = `<svg class="absolute bottom-0 -translate-x-1/2" style="left:${pct(125)}%" width="14" height="8" viewBox="0 0 14 8"><path d="M0 0h14L7 8z" fill="#56dcf5"/></svg>`;
    $('playhead').style.left = pct(125) + '%';

    // ---- clips ----
    function wave(w, cy, amps) {
      const n = amps.length - 1, top = amps.map((a, i) => `${i * w / n} ${cy - a}`), bot = amps.map((a, i) => `${i * w / n} ${cy + a}`).reverse();
      return `<path d="M${top.concat(bot).join('L')}z"/>`;
    }
    function clip(a, b, o) {
      let lines = '';
      for (let g = Math.ceil((a + .2 - 23) / 2) * 2 + 23; g < b - .1; g += 2)
        lines += `<i class="absolute inset-y-0 w-0.5 bg-black/25" style="left:${(g - a) / (b - a) * 100}%"></i>`;
      return `<div class="absolute top-px bottom-0 flex flex-col overflow-hidden border-l-2 ${o.cls}" style="left:${pct(a)}%;width:${pct(b) - pct(a)}%">
        <div class="h-[31px] shrink-0 overflow-hidden border-b-2 border-black/25 pt-[5px] whitespace-nowrap ${o.pad || 'pl-1'}">${o.text || ''}</div>
        <div class="relative flex-1">${o.noGrid ? '' : lines}<svg class="absolute inset-0 h-full w-full" viewBox="${o.box}" preserveAspectRatio="none">${o.art}</svg></div></div>`;
    }

    const notes = [];
    [[2, 14], [17, 30], [34, 50], [56, 70], [85, 122], [140, 160], [171, 183], [197, 237]].forEach(([a, b]) => notes.push([a, b, 62]));
    notes.push([70, 84, 58], [128, 138, 65], [183, 197, 58]);
    [[255, 18, 267], [269, 14, 280], [281, 10, 302], [310, 26, 337], [337, 30, 367], [369, 18, 379], [381, 10, 395], [397, 14, 417], [424, 26, 437], [437, 30, 450], [452, 26, 494],
      [509, 18, 522], [524, 14, 535], [537, 10, 556], [567, 10, 577], [579, 7, 593], [595, 3, 622], [622, 10, 647], [650, 14, 670], [678, 26, 705], [707, 30, 732], [733, 40, 775]]
      .forEach(([a, y, b]) => notes.push([a, b, y]));
    [254, 507].forEach(o => [[2, 20], [25, 52], [56, 70], [84, 124], [140, 160], [171, 183], [197, 234]].forEach(([a, b]) => notes.push([a + o, b + o, 62])));
    [254, 507].forEach(o => notes.push([o + 70, o + 83, 58], [o + 126, o + 140, 65]));
    notes.push([437, 450, 58], [733, 775, 62]);
    const melody = `<path d="${notes.map(([a, b, y]) => `M${a} ${y}H${b}`).join('')}" stroke="#6f504d" stroke-width="3"/><path d="M254 0V68M507 0V68" stroke="#8f6763" stroke-width="2"/>`;

    const lanes = tracks.map(() => '');
    [35, 93].forEach(b => {
      lanes[1] += clip(b, b + 28, { cls: 'border-[#a06f6a] bg-[#c8918b]', box: '0 0 791 68', art: melody });
      [9, 18].forEach(o => lanes[1] += `<div class="absolute top-px h-[31px] w-0.5 bg-[#8f6763]" style="left:${pct(b + o)}%"></div>`);
    });
    let dotsA = '', dotsB = '';
    [11, 19, 21, 32, 42, 52, 56, 62, 71, 74, 84, 94, 97, 107].forEach((x, i) => dotsA += `<path d="M${x} ${i % 3 ? 8 : 6}h2v3h-2z"/>`);
    dotsA += '<path d="M27 24h2v2h-2zM29 30h2v2h-2zM68 18h3v3h-3zM71 23h2v2h-2z"/>';
    for (let i = 0; i < 14; i++) dotsB += `<path d="M${10 + i * 7} ${6 + i % 3}h3v2h-3zM${5 + i * 7.5} 17h2v2h-2zM${8 + i * 7} ${24 - i % 2}h2v2h-2zM${6 + i * 7.2} ${30 - (i % 4 === 1 ? 3 : 0)}h2v2h-2z"/>`;
    lanes[2] += clip(66.77, 73.06, { cls: 'border-[#859800] bg-[#a6be00]', box: '0 0 108 34', art: dotsA });
    lanes[2] += clip(80.75, 87.05, { cls: 'border-[#859800] bg-[#a6be00]', box: '0 0 108 34', art: dotsB });

    const ghost = (list, cls) => list.map(([a, b]) => `<div class="absolute bg-black/20 ${cls}" style="left:${pct(a)}%;width:${pct(b) - pct(a)}%"></div>`).join('');
    lanes[4] = ghost(ranges.shaker, 'top-2.5 h-0.5') + ghost(ranges.tamb, 'top-[14px] h-[3px]') + ghost(ranges.audio, 'top-[19px] h-0.5') + ghost([[61, 93], [102, 123]], 'top-[23px] h-[3px]');
    lanes[6] = ghost(ranges.shaker, 'top-1 h-2') + ghost(ranges.tamb, 'top-[14px] h-[7px]') + ghost(ranges.audio, 'top-[23px] h-2');

    const dense = [5.5, 6, 5, 5.5, 6.5, 6, 5, 5.5, 6.5, 6, 6, 4.5, 6, 6.5, 5.5, 6];
    lanes[7] = ranges.shaker.map(([a, b]) => clip(a, b, {
      cls: 'border-[#b9b75d] bg-[#f6f47c] text-black/85', text: 'Sha', box: '0 0 30 34', noGrid: true,
      art: `<path d="M22 0h8v34h-4z" fill="#cfcd68"/><g fill="#22211b">${wave(30, 9, dense)}${wave(30, 26, dense.map(v => v / 2))}<path d="M15 20h1.500v14H15z"/></g>`
    }) + `<i class="absolute top-px h-[5px] w-0.5 bg-[#22211b]" style="left:${pct(a + 1)}%"></i>`).join('');
    lanes[8] = ranges.tamb.map(([a, b]) => clip(a, b, {
      cls: 'border-[#9a711b] bg-[#cb9624] text-black/85', text: '-', box: '0 0 8 34', noGrid: true, pad: 'pl-[3px]',
      art: `<path d="M0 0h8v34H0z" fill="#b28320"/><g fill="#22211b">${wave(8, 9, [4, 1, .8, .8])}${wave(8, 26, [4, 1, .8, .8])}</g>`
    })).join('');
    lanes[9] = ranges.audio.map(([a, b]) => clip(a, b, {
      cls: 'border-[#918c50] bg-[#bfb96a] text-black/85', text: 'Aud', box: '0 0 34 34',
      art: `<path d="M27 0h7v34h-3z" fill="#9c9756"/><path d="M0 9h34M0 26h34" stroke="#22211b" stroke-width="2"/>`
    })).join('');
    const shake = [1, 2, 4, 2, 3, 7, 4, 2, 5, 3, 2, 6, 5, 2, 3, 4, 2, 1];
    lanes[10] = loops.map(([a, b]) => clip(a, b, {
      cls: 'border-[#b9b75d] bg-[#f6f47c] text-black/85', text: b - a < 2 ? 'T' : 'Tam', box: `0 0 ${(b - a) * 16} 34`,
      art: `<g fill="#22211b">${wave(32, 9, shake)}${wave(32, 26, shake.map(v => 1 + v * .6))}</g>`
    })).join('');
    lanes[11] = clip(FIRST, 28.2, {
      cls: 'border-[#bfb96a] bg-[#bfb96a] text-black/85', text: '... Audio', box: '0 0 106 34',
      art: `<path d="M98 0h8v34h-2z" fill="#9c9756"/><g fill="#22211b">${wave(106, 9, [4, 5, 5, 1.5, 1, 1, 1, 1, 4, 6, 5, 6, 5, 1.5, 1, .8, .8])}${wave(106, 26, [3, 3, 2, 1.5, 1, 1, 1, 1, 2, 2, 3, 3, 2, 1.5, 1, .8, .8])}</g>`
    });
    $('lanes').innerHTML = lanes.map(l => `<div class="relative min-h-0 flex-1 border-b-4 border-[#505050]">${l}</div>`).join('');

    // ---- overview ----
    const op = b => (b - 1) / 136 * 100;
    const mini = (list, cls) => list.map(([a, b]) => `<div class="absolute border-l-2 border-black/40 ${cls}" style="left:${op(a)}%;width:${op(b) - op(a)}%"></div>`).join('');
    $('overview').innerHTML =
      mini([[35, 44], [44, 53], [53, 63], [93, 102], [102, 111], [111, 121]], 'top-0.5 h-0.5 bg-[#c8918b]') +
      mini([[66.77, 73], [80.75, 87]], 'top-[3px] h-[3px] bg-[#a6be00]') +
      mini(ranges.shaker, 'top-[13px] h-0.5 bg-[#f6f47c]') + mini(ranges.tamb, 'top-[15px] h-0.5 bg-[#cb9624]') +
      mini(ranges.audio, 'top-[17px] h-0.5 bg-[#bfb96a]') + mini(loops, 'top-[18px] h-[3px] bg-[#f6f47c]') +
      mini([[16, 28.2]], 'bottom-0 h-0.5 bg-[#bfb96a]') +
      `<div class="absolute inset-y-0 w-0.5 bg-black" style="left:${op(125)}%"></div>
       <div class="absolute -inset-y-1 border-4 border-black" style="left:${op(22)}%;width:${op(131) - op(22)}%"></div>`;

    // ---- chain thumbnail ----
    $('thumb').innerHTML = `<path d="M3 1h75v29H3zM81 1h46v29H81zM130 1h40v29h-40zM173 1h18v29h-18zM194 1h24v29h-24z" fill="#8e8e8e"/>
      <path d="M9 4h59v21H9zM93 4h23v13H93zM145 5h23v21h-23zM195 5h21v21h-21zM185 12h2v16h-2z" fill="#191919"/>
      <path d="M14 25l3-10q20-3 50-1M95 9l6 5" fill="none" stroke="#2f7f8f"/>
      <path d="M16 14h2v3h-2zM31 12h2v2h-2zM35 11h2v2h-2zM61 11h2v2h-2zM70 17h6v2h-6zM70 4h6v2h-6zM182 8h8v2h-8zM173 27h7v2h-7zM145 25h2v2h-2zM195 25h2v2h-2z" fill="#ffae00"/>
      <path d="M10 27h4v2h-4zM17 27h4v2h-4zM24 27h4v2h-4zM31 27h4v2h-4zM70 21h5v2h-5zM96 21h4v5h-4z" fill="#56c4d8"/>
      <path d="M93 19h9v9h-9zM106 19h9v9h-9z" fill="none" stroke="#555"/><path d="M83 6h6v3h-6zM83 13h6v3h-6zM83 21h6v4h-6zM119 8h5v3h-5zM119 20h5v3h-5zM133 13h7v4h-7zM133 21h7v4h-7zM175 7h5v5h-5z" fill="#6b6b6b"/>
      <path d="M132 7h10v2h-10zM145 28h11v1h-11zM158 28h10v1h-10z" fill="#dcdcdc"/>`;
  </script>
</body>
</html>
